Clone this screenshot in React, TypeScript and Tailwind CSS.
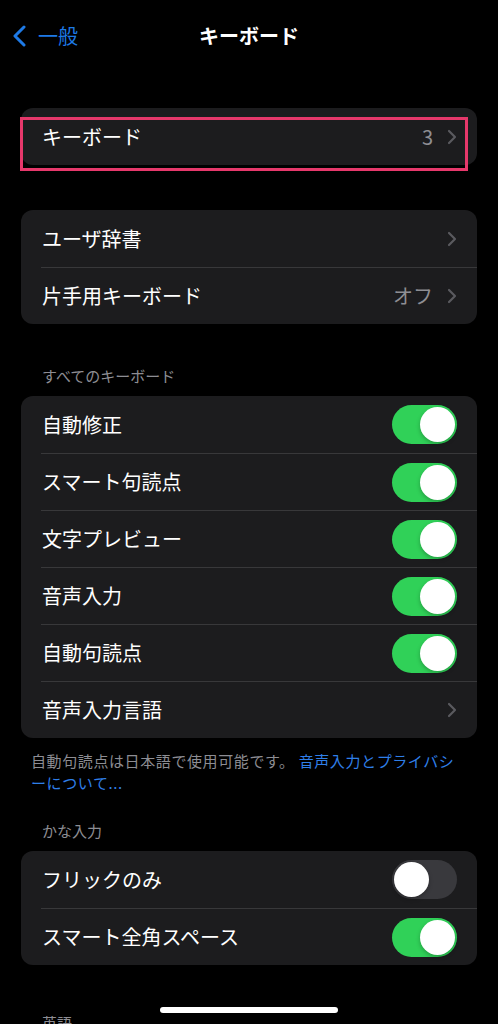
import React from "react";

type Row = {
  label: string;
  value?: string;
  chevron?: boolean;
  toggle?: boolean;
};

const groupKeyboards: Row[] = [{ label: "キーボード", value: "3", chevron: true }];

const groupDict: Row[] = [
  { label: "ユーザ辞書", chevron: true },
  { label: "片手用キーボード", value: "オフ", chevron: true },
];

const groupAll: Row[] = [
  { label: "自動修正", toggle: true },
  { label: "スマート句読点", toggle: true },
  { label: "文字プレビュー", toggle: true },
  { label: "音声入力", toggle: true },
  { label: "自動句読点", toggle: true },
  { label: "音声入力言語", chevron: true },
];

const groupKana: Row[] = [
  { label: "フリックのみ", toggle: false },
  { label: "スマート全角スペース", toggle: true },
];

const groupEnglish: Row[] = [
  { label: "自動大文字入力", toggle: true },
  { label: "スペルチェック", toggle: true },
];

function Chevron() {
  return (
    <svg width="10" height="16" viewBox="0 0 10 16" fill="none">
      <path
        d="M2 2l6 6-6 6"
        stroke="#5a5a5f"
        strokeWidth="2.2"
        strokeLinecap="round"
        strokeLinejoin="round"
      />
    </svg>
  );
}

function Toggle({ on }: { on: boolean }) {
  return (
    <div
      className={`w-[65px] h-[39px] rounded-full p-[2px] flex ${
        on ? "bg-[#30d158] justify-end" : "bg-[#39393d] justify-start"
      }`}
    >
      <div className="w-[35px] h-[35px] rounded-full bg-white shadow-[0_2px_4px_rgba(0,0,0,0.25)]" />
    </div>
  );
}

function Group({ rows }: { rows: Row[] }) {
  return (
    <div className="mx-[21px] rounded-[12px] bg-[#1c1c1e] overflow-hidden">
      {rows.map((row, i) => (
        <div key={row.label} className="pl-[20px]">
          <div
            className={`h-[57px] flex items-center pr-[20px] ${
              i > 0 ? "border-t border-[#38383a]" : ""
            }`}
          >
            <span className="flex-1 pl-[1px] text-[20px] leading-[26px] text-white">
              {row.label}
            </span>
            {row.value && (
              <span className="text-[20px] leading-[26px] text-[#8e8e93] mr-[14px]">
                {row.value}
              </span>
            )}
            {row.chevron && <Chevron />}
            {row.toggle !== undefined && <Toggle on={row.toggle} />}
          </div>
        </div>
      ))}
    </div>
  );
}

function SectionHeader({ children }: { children: React.ReactNode }) {
  return (
    <div className="px-[42px] pb-[10px] text-[15px] leading-[20px] text-[#8d8d93]">
      {children}
    </div>
  );
}

export default function App() {
  return (
    <div
      className="relative min-h-screen bg-black overflow-hidden"
      style={{ fontFamily: '"Noto Sans CJK JP", "Noto Sans", sans-serif' }}
    >
      {/* Nav bar */}
      <div className="relative h-[72px] flex items-center">
        <div className="flex items-center pl-[12px] gap-[12px]">
          <svg width="14" height="22" viewBox="0 0 14 22" fill="none">
            <path
              d="M12 2L3 11l9 9"
              stroke="#1e7ae6"
              strokeWidth="3"
              strokeLinecap="round"
              strokeLinejoin="round"
            />
          </svg>
          <span className="text-[20px] leading-[26px] text-[#1e7ae6]">一般</span>
        </div>
        <div className="absolute inset-x-0 text-center text-[20px] leading-[26px] font-bold text-white pointer-events-none">
          キーボード
        </div>
      </div>

      {/* Keyboards */}
      <div className="relative mt-[36px]">
        <Group rows={groupKeyboards} />
        <div className="absolute left-[20px] top-[9px] w-[448px] h-[54px] border-[3px] border-[#e6386b] pointer-events-none" />
      </div>

      <div className="mt-[45px]">
        <Group rows={groupDict} />
      </div>

      <div className="mt-[42px]">
        <SectionHeader>すべてのキーボード</SectionHeader>
        <Group rows={groupAll} />
        <p className="px-[31px] pt-[12px] text-[15px] leading-[22px] tracking-[0.6px] text-[#8d8d93]">
          自動句読点は日本語で使用可能です。{" "}
          <span className="text-[#2f7fe8]">
            音声入力とプライバシ
            <br />
            ーについて...
          </span>
        </p>
      </div>

      <div className="mt-[27px]">
        <SectionHeader>かな入力</SectionHeader>
        <Group rows={groupKana} />
      </div>

      <div className="mt-[48px]">
        <SectionHeader>英語</SectionHeader>
        <Group rows={groupEnglish} />
      </div>

      {/* Home indicator */}
      <div className="absolute left-[160px] top-[1007px] w-[178px] h-[6px] rounded-full bg-white" />
    </div>
  );
}
